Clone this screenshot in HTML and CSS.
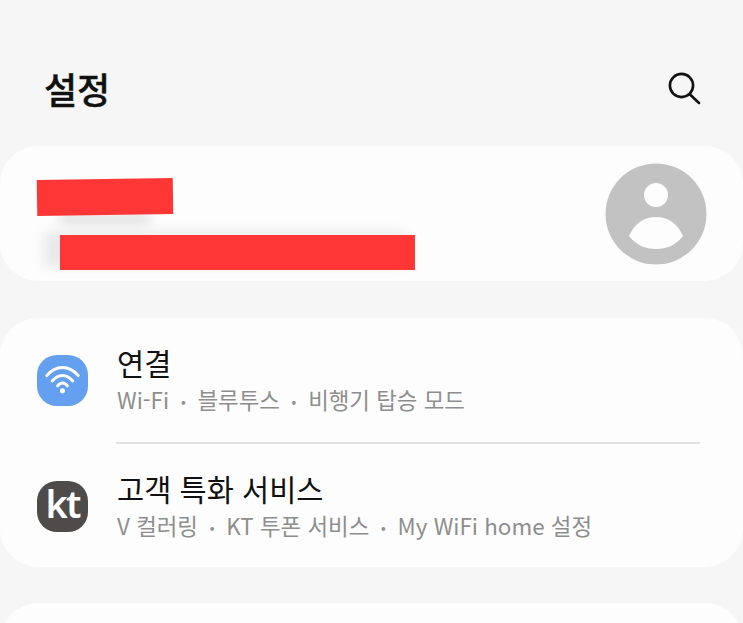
FILE: index.html
```html
<!DOCTYPE html>
<html lang="ko">
<head>
    <meta charset="UTF-8">
    <meta name="viewport" content="width=device-width, initial-scale=1.0">
    <title>설정</title>
    <link rel="stylesheet" href="styles.css">
</head>
<body>
    <header class="top-bar">
        <h1 class="page-title">설정</h1>
        <svg class="search-icon" viewBox="0 0 34 34" fill="none" stroke="#111" stroke-width="2.6" stroke-linecap="round">
            <circle cx="14.5" cy="14.5" r="11.6"/>
            <path d="M23 23.5L32 32"/>
        </svg>
    </header>

    <section class="card profile-card">
        <div class="blur blur-name"></div>
        <div class="blur blur-mail"></div>
        <div class="redact redact-name"></div>
        <div class="redact redact-mail"></div>
        <svg class="avatar" viewBox="0 0 102 102">
            <circle cx="51" cy="51" r="50.5" fill="#c2c2c2"/>
            <circle cx="51" cy="32" r="12" fill="#fdfdfd"/>
            <path d="M24 73C29 61 39 54 51 54C63 54 73 61 78 73C71 82 62 86 51 86C40 86 31 82 24 73Z" fill="#fdfdfd"/>
        </svg>
    </section>

    <section class="card menu-card">
        <div class="menu-row">
            <div class="app-icon wifi-icon">
                <svg viewBox="0 0 52 52" fill="none" stroke="#fff" stroke-width="3" stroke-linecap="round">
                    <path d="M10 21C19 10 33 10 42 21"/>
                    <path d="M15.5 26.5C22 19 30 19 36.5 26.5"/>
                    <path d="M21 31.5C24 27.5 28 27.5 31 31.5"/>
                    <circle cx="26" cy="36.5" r="2.6" fill="#fff" stroke="none"/>
                </svg>
            </div>
            <div class="menu-text">
                <div class="menu-title">연결</div>
                <div class="menu-sub">Wi-Fi <span class="dot">•</span> 블루투스 <span class="dot">•</span> 비행기 탑승 모드</div>
            </div>
        </div>
        <div class="divider"></div>
        <div class="menu-row">
            <div class="app-icon kt-icon"><span class="kt-mark">kt</span></div>
            <div class="menu-text">
                <div class="menu-title">고객 특화 서비스</div>
                <div class="menu-sub">V 컬러링 <span class="dot">•</span> KT 투폰 서비스 <span class="dot">•</span> My WiFi home 설정</div>
            </div>
        </div>
    </section>

    <div class="next-clip">
        <section class="card next-card"></section>
    </div>
</body>
</html>
```

FILE: styles.css
```css
* {
    margin: 0;
    padding: 0;
    box-sizing: border-box;
}

html, body {
    height: 623px;
    overflow: hidden;
}

body {
    background: #f6f6f6;
    font-family: "Noto Sans CJK KR", "Noto Sans", sans-serif;
    color: #111;
}

.top-bar {
    height: 146px;
    padding: 0 42px 0 44px;
    display: flex;
    justify-content: space-between;
    align-items: center;
}

.page-title {
    font-size: 36px;
    font-weight: 500;
    line-height: 44px;
    margin-top: 30px;
    -webkit-text-stroke: 0.4px #111;
}

.search-icon {
    width: 34px;
    height: 34px;
    margin-top: 29px;
}

.card {
    background: #fdfdfd;
    border-radius: 38px;
}

.profile-card {
    position: relative;
    height: 135px;
    display: flex;
    justify-content: flex-end;
    align-items: center;
    padding-right: 36px;
}

.avatar {
    width: 102px;
    height: 102px;
}

.redact {
    position: absolute;
    background: #ff3636;
}

.redact-name {
    left: 37px;
    top: 33px;
    width: 136px;
    height: 36px;
    transform: rotate(-0.8deg);
}

.redact-mail {
    left: 60px;
    top: 89px;
    width: 355px;
    height: 35px;
}

.blur {
    position: absolute;
    background: #dcdcdc;
    filter: blur(6px);
}

.blur-name {
    left: 60px;
    top: 68px;
    width: 90px;
    height: 10px;
}

.blur-mail {
    left: 44px;
    top: 86px;
    width: 362px;
    height: 34px;
    background: #e8e8e8;
}

.menu-card {
    margin-top: 37px;
    height: 249px;
    padding: 0 43px 0 37px;
}

.menu-row {
    height: 124px;
    display: flex;
    align-items: center;
    gap: 29px;
}

.app-icon {
    width: 51px;
    height: 51px;
    border-radius: 20px;
    flex-shrink: 0;
    display: flex;
    justify-content: center;
    align-items: center;
}

.app-icon svg {
    width: 51px;
    height: 51px;
}

.wifi-icon {
    background: #659ff0;
}

.kt-icon {
    background: #4f4b4a;
}

.kt-mark {
    font-family: "Noto Sans", sans-serif;
    font-size: 38px;
    font-weight: 600;
    line-height: 1;
    letter-spacing: -2px;
    color: #fff;
    margin-top: -6px;
}

.menu-title {
    font-size: 29.5px;
    line-height: 36px;
    margin-top: 1px;
    color: #111;
}

.menu-sub {
    font-size: 22.4px;
    line-height: 32px;
    margin-top: 3px;
    color: #8e8e8e;
    white-space: nowrap;
}

.dot {
    font-size: 14px;
    margin: 0 5.5px;
    vertical-align: 2px;
}

.divider {
    height: 2px;
    margin-left: 79px;
    background: #e2e2e2;
}

.next-clip {
    margin-top: 36px;
    height: 20px;
    overflow: hidden;
}

.next-card {
    height: 80px;
}
```
